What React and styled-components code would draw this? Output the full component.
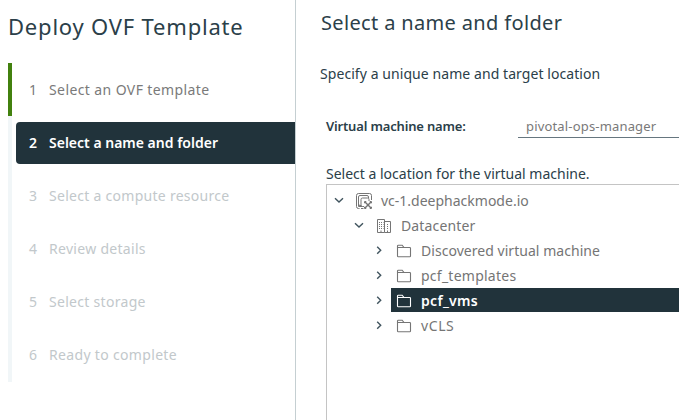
import React from 'react';
import styled, { createGlobalStyle } from 'styled-components';

const GlobalStyle = createGlobalStyle`
  * { box-sizing: border-box; }
  body {
    margin: 0;
    overflow: hidden;
    background: #fff;
    color: #2b4049;
    font-family: "Noto Sans", sans-serif;
    font-size: 14px;
  }
`;

const Wizard = styled.div`
  display: flex;
  width: 100%;
  height: 420px;
  overflow: hidden;
`;

const Sidebar = styled.aside`
  flex: 0 0 296px;
  padding: 11px 0 0 8px;
  border-right: 1px solid #c5cfd2;
`;

const Title = styled.h1`
  margin: 0 0 22px;
  font-size: 22px;
  font-weight: 400;
  line-height: 30px;
  letter-spacing: 0.8px;
  white-space: nowrap;
`;

const Steps = styled.ol`
  margin: 0;
  padding: 0;
  list-style: none;
`;

const Step = styled.li`
  display: flex;
  align-items: center;
  height: 53px;
  padding-left: 4px;
  border-left: 4px solid ${p => (p.$state === 'done' ? '#42810e' : '#f1f6f8')};

  &:last-child { height: 54px; }
`;

const StepButton = styled.div`
  display: flex;
  align-items: center;
  flex: 1;
  height: 42px;
  padding-left: 13px;
  border-radius: 4px 0 0 4px;
  line-height: 20px;
  white-space: nowrap;
  color: ${p => ({ done: '#7a7a7a', current: '#fff', todo: '#c2c8cb' })[p.$state]};
  background: ${p => (p.$state === 'current' ? '#21333b' : 'transparent')};
  font-weight: ${p => (p.$state === 'current' ? 600 : 400)};
`;

const StepNumber = styled.span`
  width: 20px;
`;

const Label = styled.span`
  letter-spacing: ${p => p.$track || 0}px;
  white-space: nowrap;
`;

const Content = styled.main`
  flex: 1;
  min-width: 0;
  display: flex;
  flex-direction: column;
  padding: 9px 0 0 24px;
`;

const Heading = styled.h2`
  margin: 0 0 27px;
  padding-left: 1px;
  font-size: 20px;
  font-weight: 400;
  line-height: 28px;
  letter-spacing: 0.35px;
`;

const Intro = styled.p`
  margin: 0 0 22px;
  line-height: 20px;
  letter-spacing: 0.07px;
`;

const Field = styled.div`
  display: flex;
  height: 32px;
  margin: 0 0 26px 6px;
  font-size: 13px;
  line-height: 18px;
`;

const FieldLabel = styled.label`
  width: 192px;
  padding-top: 11px;
  font-weight: 600;
  letter-spacing: -0.17px;
`;

const FieldValue = styled.div`
  flex: 1;
  padding: 11px 0 0 8px;
  border-bottom: 1px solid #66767f;
  color: #797979;
  letter-spacing: 0.17px;
`;

const Caption = styled.p`
  margin: 0 0 0 6px;
  line-height: 20px;
`;

const Tree = styled.div`
  flex: 1;
  margin-left: 6px;
  padding-top: 3px;
  border: solid #c4c4c4;
  border-width: 1px 0 0 1px;
`;

const TreeRow = styled.div`
  display: flex;
  align-items: center;
  height: 24px;
  margin-bottom: 1px;
  padding-left: ${p => 4 + p.$depth * 20}px;
`;

const Toggle = styled.span`
  display: flex;
  justify-content: center;
  width: 16px;
  margin-right: 4px;
  color: #40545e;
`;

const Node = styled.div`
  display: flex;
  align-items: center;
  flex: 1;
  height: 24px;
  padding: 2px 0 0 4px;
  line-height: 20px;
  color: ${p => (p.$selected ? '#fff' : '#757575')};
  background: ${p => (p.$selected ? '#21333b' : 'transparent')};
  font-weight: ${p => (p.$selected ? 600 : 400)};
`;

const NodeIcon = styled.svg`
  flex: none;
  width: 18px;
  height: 18px;
  margin-right: 8px;
  fill: none;
  stroke: currentColor;
`;

function Chevron({ open }) {
  return (
    <svg width="12" height="12" viewBox="0 0 12 12" fill="none" stroke="currentColor" strokeWidth="1.4">
      <path d={open ? 'M2 4.200 6 8 10 4.200' : 'M4.200 2.800 7.700 6.300 4.200 9.800'} />
    </svg>
  );
}

function Icon({ kind }) {
  if (kind === 'vcenter') {
    return (
      <NodeIcon viewBox="0 0 18 18" strokeWidth="1">
        <path d="M4.500 16.500h-1a2 2 0 0 1-2-2v-11a2 2 0 0 1 2-2h11a2 2 0 0 1 2 2V8M6 16.500h2.500" />
        <path d="M6 13.500H5a1.500 1.500 0 0 1-1.500-1.500V5A1.500 1.500 0 0 1 5 3.500h7A1.500 1.500 0 0 1 13.500 5v1M3.500 12v2.500h4" />
        <path d="M9 14.500H7.500A1.500 1.500 0 0 1 6 13V7.500A1.500 1.500 0 0 1 7.500 6h5A1.500 1.500 0 0 1 14 7.500V9" />
        <path d="m10 10 6 6M16 10l-6 6" />
        <path d="M9.500 9.500h1.500V11H9.500zM15 9.500h1.500V11H15zM9.500 15h1.500v1.500H9.500zM15 15h1.500v1.500H15zM12 12h2v2h-2z" />
      </NodeIcon>
    );
  }
  if (kind === 'datacenter') {
    return (
      <NodeIcon viewBox="0 0 18 18" strokeWidth="1">
        <path d="M2.500 15.500v-13h7v13zM9.500 4.500h6v11h-6" />
        <path d="M4 5.500h4.500M4 7.500h4.500M4 9.500h4.500M4 11.500h4.500M12 7.500h2M12 9.500h2M12 11.500h2" strokeDasharray="1 1" />
        <path d="M6 15.500v-2M12.500 15.500v-2" />
      </NodeIcon>
    );
  }
  return (
    <NodeIcon viewBox="0 0 18 18" strokeWidth="1.1">
      <path d="M2.500 14V4a.8.8 0 0 1 .8-.8h3.900L9 5.500h5.700a.8.8 0 0 1 .8.800V14a.8.8 0 0 1-.8.800H3.300a.8.8 0 0 1-.8-.8zM2.500 5.500H9" />
    </NodeIcon>
  );
}

const steps = [
  { name: 'Select an OVF template', state: 'done', track: 0.4 },
  { name: 'Select a name and folder', state: 'current', track: 0 },
  { name: 'Select a compute resource', state: 'todo', track: 0.28 },
  { name: 'Review details', state: 'todo', track: 0.3 },
  { name: 'Select storage', state: 'todo', track: 0.3 },
  { name: 'Ready to complete', state: 'todo', track: 0.33 },
];

const nodes = [
  { name: 'vc-1.deephackmode.io', kind: 'vcenter', depth: 0, open: true, track: 0 },
  { name: 'Datacenter', kind: 'datacenter', depth: 1, open: true, track: 0.15 },
  { name: 'Discovered virtual machine', kind: 'folder', depth: 2, track: 0.04 },
  { name: 'pcf_templates', kind: 'folder', depth: 2, track: 0.25 },
  { name: 'pcf_vms', kind: 'folder', depth: 2, selected: true, track: 0.3 },
  { name: 'vCLS', kind: 'folder', depth: 2, track: 0.6 },
];

export default function App() {
  return (
    <Wizard>
      <GlobalStyle />
      <Sidebar>
        <Title>Deploy OVF Template</Title>
        <Steps>
          {steps.map((s, i) => (
            <Step key={s.name} $state={s.state}>
              <StepButton $state={s.state}>
                <StepNumber>{i + 1}</StepNumber>
                <Label $track={s.track}>{s.name}</Label>
              </StepButton>
            </Step>
          ))}
        </Steps>
      </Sidebar>
      <Content>
        <Heading>Select a name and folder</Heading>
        <Intro>Specify a unique name and target location</Intro>
        <Field>
          <FieldLabel>Virtual machine name:</FieldLabel>
          <FieldValue>pivotal-ops-manager</FieldValue>
        </Field>
        <Caption>Select a location for the virtual machine.</Caption>
        <Tree>
          {nodes.map(n => (
            <TreeRow key={n.name} $depth={n.depth}>
              <Toggle><Chevron open={n.open} /></Toggle>
              <Node $selected={n.selected}>
                <Icon kind={n.kind} />
                <Label $track={n.track}>{n.name}</Label>
              </Node>
            </TreeRow>
          ))}
        </Tree>
      </Content>
    </Wizard>
  );
}
